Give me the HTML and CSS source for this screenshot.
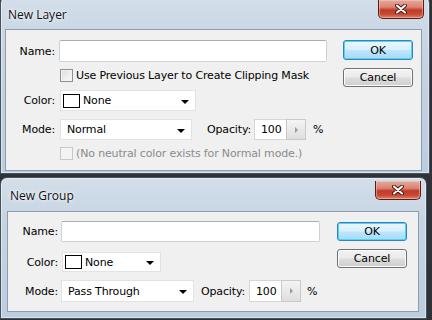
FILE: index.html
```html
<!DOCTYPE html>
<html lang="en">
<head>
<meta charset="utf-8">
<title>New Layer / New Group</title>
<link rel="stylesheet" href="styles.css">
</head>
<body>
<div class="desk">

  <!-- New Layer -->
  <div class="win win-layer">
    <div class="titlebar">
      <span class="title">New Layer</span>
      <span class="close"><svg width="12" height="10" viewBox="0 0 12 10"><path d="M2 1.5L10 8.5M10 1.5L2 8.5" stroke="#4a1a14" stroke-width="4" stroke-linecap="round"/><path d="M2 1.5L10 8.5M10 1.5L2 8.5" stroke="#fff" stroke-width="2" stroke-linecap="round"/></svg></span>
    </div>
    <div class="client">
      <div class="fields">
        <div class="row row-name">
          <span class="lbl">Name:</span>
          <span class="text name"></span>
        </div>
        <div class="row row-check">
          <span class="check"></span>
          <span>Use Previous Layer to Create Clipping Mask</span>
        </div>
        <div class="row row-color">
          <span class="lbl">Color:</span>
          <span class="select sel-color"><span class="swatch"></span>None<span class="arrow"></span></span>
        </div>
        <div class="row row-mode">
          <span class="lbl">Mode:</span>
          <span class="select sel-mode">Normal<span class="arrow"></span></span>
          <span class="opacity">Opacity:</span>
          <span class="num">100</span><span class="spin"><span class="tri"></span></span>
          <span class="pct">%</span>
        </div>
        <div class="row row-note">
          <span class="check off"></span>
          <span class="dim">(No neutral color exists for Normal mode.)</span>
        </div>
      </div>
      <div class="buttons">
        <span class="btn default">OK</span>
        <span class="btn">Cancel</span>
      </div>
    </div>
  </div>

  <!-- New Group -->
  <div class="win win-group">
    <div class="titlebar">
      <span class="title">New Group</span>
      <span class="close"><svg width="12" height="10" viewBox="0 0 12 10"><path d="M2 1.5L10 8.5M10 1.5L2 8.5" stroke="#4a1a14" stroke-width="4" stroke-linecap="round"/><path d="M2 1.5L10 8.5M10 1.5L2 8.5" stroke="#fff" stroke-width="2" stroke-linecap="round"/></svg></span>
    </div>
    <div class="client">
      <div class="fields">
        <div class="row row-name">
          <span class="lbl">Name:</span>
          <span class="text name"></span>
        </div>
        <div class="row row-color">
          <span class="lbl">Color:</span>
          <span class="select sel-color"><span class="swatch"></span>None<span class="arrow"></span></span>
        </div>
        <div class="row row-mode">
          <span class="lbl">Mode:</span>
          <span class="select sel-mode">Pass Through<span class="arrow"></span></span>
          <span class="opacity">Opacity:</span>
          <span class="num">100</span><span class="spin"><span class="tri"></span></span>
          <span class="pct">%</span>
        </div>
      </div>
      <div class="buttons">
        <span class="btn default">OK</span>
        <span class="btn">Cancel</span>
      </div>
    </div>
  </div>

</div>
</body>
</html>
```

FILE: styles.css
```css
*{ box-sizing:border-box; }
body{
  margin:0;
  background:#2f3337;
  font-family:"DejaVu Sans", Tahoma, sans-serif;
  font-size:11px;
  letter-spacing:-0.15px;
  color:#000;
}
div.desk{
  display:flex;
  flex-direction:column;
  gap:3px;
  height:320px;
  overflow:hidden;
}

/* window frame */
div.win{
  border:1px solid #47525e;
  border-radius:7px 7px 0 0;
  background:linear-gradient(180deg, #d3dee9 0%, #c6d4e2 30%, #bccddf 100%);
  box-shadow:inset 0 0 0 1px rgba(255,255,255,.45);
}
div.win-layer{ width:430px; margin-top:-4px; padding:0 7px 2px 4px; }
div.win-group{ width:427px; padding:0 7px 6px 6px; }

div.titlebar{
  height:33px;
  display:flex;
  align-items:flex-start;
  justify-content:space-between;
}
div.win-layer div.titlebar{ height:32px; }
span.title{
  font-family:"Open Sans", "Noto Sans", sans-serif;
  font-size:12px;
  letter-spacing:0;
  line-height:16px;
  margin-top:10px;
  padding-left:3px;
  color:#111;
  text-shadow:0 0 6px rgba(255,255,255,.9), 0 0 3px rgba(255,255,255,.8);
}
span.close{
  width:46px;
  height:19px;
  margin-top:3px;
  margin-right:-2px;
  border:1px solid #5b1c17;
  border-top:none;
  border-radius:0 0 5px 5px;
  background:linear-gradient(180deg, #e4a99c 0%, #d98474 40%, #c23a27 55%, #c84a34 80%, #e0866c 100%);
  box-shadow:inset 0 0 0 1px rgba(255,210,200,.45);
  display:flex;
  align-items:center;
  justify-content:center;
}

/* client area */
div.client{
  display:flex;
  background:#f0f0f0;
  border:1px solid #8d9db0;
}
div.win-layer div.client{ height:142px; }
div.win-group div.client{ height:101px; }

div.fields{ flex:1; }
div.row{
  display:flex;
  align-items:center;
}
span.lbl{
  width:49px;
  text-align:right;
  margin-right:4px;
}
div.win-group span.lbl{ width:50px; margin-right:3px; }

/* rows, New Layer */
div.win-layer div.row-name{ margin-top:10px; height:22px; }
div.win-layer div.row-check{ margin-top:6px; height:15px; }
div.win-layer div.row-color{ margin-top:7px; height:21px; }
div.win-layer div.row-mode{ margin-top:8px; height:21px; }
div.win-layer div.row-note{ margin-top:6px; height:14px; }

/* rows, New Group */
div.win-group div.row-name{ margin-top:9px; height:21px; }
div.win-group div.row-color{ margin-top:10px; height:20px; }
div.win-group div.row-mode{ margin-top:8px; height:22px; }

span.text{
  height:100%;
  background:#fff;
  border:1px solid #cdd2d8;
  border-top-color:#abadb3;
  border-radius:2px;
}
div.win-layer span.name{ width:268px; }
div.win-group span.name{ width:259px; }

span.check{
  width:13px;
  height:13px;
  margin-left:54px;
  margin-right:3px;
  border:1px solid #8e8f8f;
  background:linear-gradient(135deg, #dcdcdc, #fbfbfb);
  box-shadow:inset 0 0 0 1px #f4f4f4;
}
span.check.off{ border-color:#c8c8c8; background:#f3f3f3; }
span.dim{ color:#8b8b8b; }

span.select{
  position:relative;
  height:100%;
  display:flex;
  align-items:center;
  background:#fff;
  border:1px solid #e2e2e2;
  padding-left:6px;
}
span.sel-color{ padding-left:2px; }
div.win-layer span.sel-color{ width:136px; margin-left:1px; }
div.win-layer span.sel-mode{ width:132px; margin-left:1px; }
div.win-group span.sel-color{ width:99px; margin-left:1px; }
div.win-group span.sel-mode{ width:133px; }
span.swatch{
  width:17px;
  height:14px;
  margin-right:3px;
  background:#fff;
  border:1px solid #000;
}
span.arrow{
  position:absolute;
  right:6px;
  top:50%;
  margin-top:-1px;
  border-left:4px solid transparent;
  border-right:4px solid transparent;
  border-top:4px solid #000;
}

span.opacity{ margin-right:3px; }
div.win-layer span.opacity{ margin-left:15px; }
div.win-group span.opacity{ margin-left:7px; margin-right:4px; }
span.num{
  width:32px;
  height:100%;
  display:flex;
  align-items:center;
  padding-left:6px;
  background:#fff;
  border:1px solid #d6d6d6;
  border-right:none;
}
span.spin{
  width:20px;
  height:100%;
  display:flex;
  align-items:center;
  justify-content:center;
  border:1px solid #c9c9c9;
  background:linear-gradient(180deg, #f4f4f4, #dedede);
}
span.tri{
  border-top:3px solid transparent;
  border-bottom:3px solid transparent;
  border-left:3px solid #9a9a9a;
}
span.pct{ margin-left:7px; }
div.win-group span.pct{ margin-left:6px; }

/* buttons */
div.buttons{
  display:flex;
  flex-direction:column;
  gap:8px;
}
div.win-layer div.buttons{ padding:10px 8px 0 0; }
div.win-group div.buttons{ padding:10px 11px 0 0; }
span.btn{
  width:70px;
  height:19px;
  display:flex;
  align-items:center;
  justify-content:center;
  border:1px solid #707070;
  border-radius:3px;
  background:linear-gradient(180deg, #f2f2f2 0%, #ebebeb 48%, #dddddd 52%, #cfcfcf 100%);
  box-shadow:inset 0 0 0 1px #fcfcfc;
}
span.btn.default{
  height:20px;
  border-color:#3c7fb1;
  background:linear-gradient(180deg, #eaf6fd 0%, #d9f0fc 48%, #bee6fd 52%, #a7d9f5 100%);
  box-shadow:inset 0 0 0 1px #48d7fe;
}
div.win-group span.btn.default{ height:19px; }
```
